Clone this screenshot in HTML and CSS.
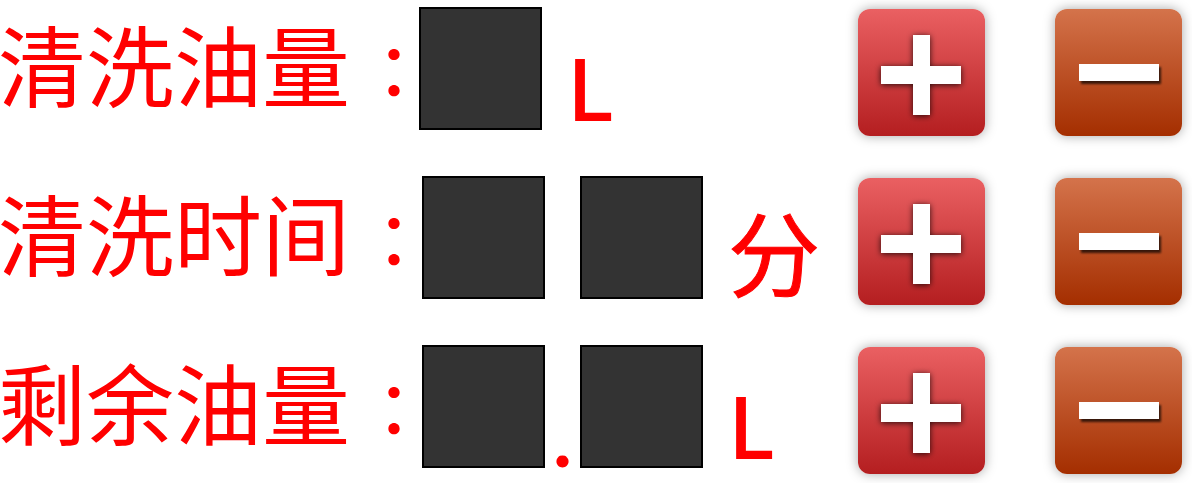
FILE: index.html
```html
<!DOCTYPE html>
<html lang="zh-CN">
<head>
<meta charset="utf-8">
<title>清洗油量</title>
<link rel="stylesheet" href="styles.css">
</head>
<body>
<svg class="defs" width="0" height="0" aria-hidden="true">
  <defs>
    <filter id="plus-shadow" x="-20%" y="-20%" width="140%" height="140%">
      <feDropShadow dx="0" dy="1" stdDeviation="3" flood-color="#000" flood-opacity="0.8"/>
    </filter>
    <filter id="minus-shadow" x="-10%" y="-50%" width="120%" height="220%">
      <feDropShadow dx="2" dy="3" stdDeviation="1" flood-color="#000" flood-opacity="0.7"/>
    </filter>
    <symbol id="plus" viewBox="0 0 127 127">
      <path d="M55 26h17v31h31v18H72v31H55V75H23V57h32z" fill="#fff" filter="url(#plus-shadow)"/>
    </symbol>
    <symbol id="minus" viewBox="0 0 127 127">
      <path d="M24 55h80v17H24z" fill="#fff" filter="url(#minus-shadow)"/>
    </symbol>
  </defs>
</svg>
<main class="panel">
  <section class="row row-single">
    <h2 class="label">清洗油量<span class="colon" lang="zh-TW">：</span></h2>
    <div class="digits"><div class="digit"></div></div>
    <span class="unit">L</span>
    <div class="actions">
      <button class="btn btn-plus" type="button" aria-label="+"><svg class="icon"><use href="#plus"/></svg></button>
      <button class="btn btn-minus" type="button" aria-label="-"><svg class="icon"><use href="#minus"/></svg></button>
    </div>
  </section>
  <section class="row">
    <h2 class="label">清洗时间<span class="colon" lang="zh-TW">：</span></h2>
    <div class="digits"><div class="digit"></div><span class="separator"></span><div class="digit"></div></div>
    <span class="unit unit-minutes">分</span>
    <div class="actions">
      <button class="btn btn-plus" type="button" aria-label="+"><svg class="icon"><use href="#plus"/></svg></button>
      <button class="btn btn-minus" type="button" aria-label="-"><svg class="icon"><use href="#minus"/></svg></button>
    </div>
  </section>
  <section class="row">
    <h2 class="label">剩余油量<span class="colon" lang="zh-TW">：</span></h2>
    <div class="digits"><div class="digit"></div><span class="separator">.</span><div class="digit"></div></div>
    <span class="unit">L</span>
    <div class="actions">
      <button class="btn btn-plus" type="button" aria-label="+"><svg class="icon"><use href="#plus"/></svg></button>
      <button class="btn btn-minus" type="button" aria-label="-"><svg class="icon"><use href="#minus"/></svg></button>
    </div>
  </section>
</main>
</body>
</html>
```
FILE: styles.css
```css
* {
  box-sizing: border-box;
}

body {
  margin: 0;
  background: #fff;
  color: #f00;
  font-family: "Noto Sans CJK SC", sans-serif;
  font-size: 88px;
  line-height: 88px;
}

.defs {
  position: absolute;
}

.panel {
  display: flex;
  flex-direction: column;
  gap: 40px;
  padding: 7px 10px 9px 0;
}

.row {
  display: flex;
  align-items: flex-start;
}

.label {
  flex: 0 0 424px;
  min-width: 0;
  margin: 0 0 0 -2px;
  padding-top: 11px;
  font-size: inherit;
  font-weight: 400;
  white-space: nowrap;
}

.row-single .label {
  flex-basis: 421px;
}

.colon {
  margin-left: 7px;
  font-family: "Noto Sans CJK TC", sans-serif;
  font-size: 74px;
  line-height: 74px;
}

.digits {
  display: flex;
}

.digit {
  width: 123px;
  height: 123px;
  border: 2px solid #000;
  background: #333;
}

.separator {
  width: 35px;
  padding-top: 59px;
  font-family: Lato, sans-serif;
  font-size: 80px;
  font-weight: 700;
  line-height: 64px;
  text-align: center;
}

.unit {
  padding: 34px 0 0 25px;
  font-size: 84px;
  font-weight: 500;
}

.unit-minutes {
  padding-top: 30px;
  font-size: 92px;
  font-weight: 400;
  -webkit-text-stroke: 1px #f00;
}

.actions {
  display: flex;
  gap: 70px;
  margin-left: auto;
  padding-top: 2px;
}

.btn {
  width: 127px;
  height: 127px;
  padding: 0;
  border: 0;
  border-radius: 12px;
  box-shadow: 0 0 12px rgba(0, 0, 0, 0.35);
}

.btn-plus {
  background: linear-gradient(#ea6062, #b41e20);
}

.btn-minus {
  background: linear-gradient(#d4734b, #a42e00);
}

.icon {
  display: block;
  width: 100%;
  height: 100%;
}
```
